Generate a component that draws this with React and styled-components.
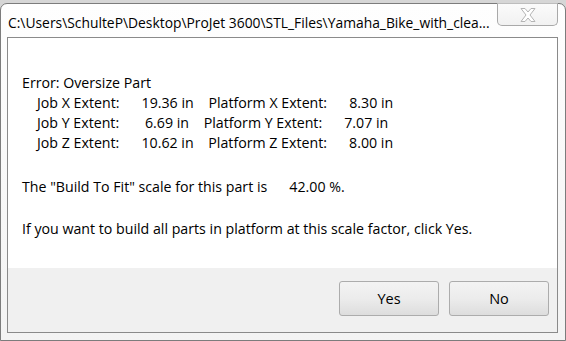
import React from 'react';
import styled, { createGlobalStyle } from 'styled-components';

const Global = createGlobalStyle`
  html, body { margin: 0; padding: 0; background: #d6d6d6; }
  body {
    width: 566px; height: 341px; overflow: hidden;
    font-family: "Open Sans", "Noto Sans", "DejaVu Sans", sans-serif;
    color: #000;
  }
`;

const Screen = styled.div`
  width: 566px;
  height: 341px;
  padding-top: 3px;
  box-sizing: border-box;
  display: flex;
`;

const Window = styled.div`
  position: relative;
  flex: 1;
  height: 338px;
  box-sizing: border-box;
  border: 1px solid #7c7c7c;
  border-radius: 7px 7px 0 0;
  background: linear-gradient(#fefefe, #f3f3f3);
  display: flex;
  flex-direction: column;
  padding: 0 7px 7px 6px;
`;

const TitleBar = styled.div`
  height: 33px;
  display: flex;
  align-items: center;
  padding: 4px 0 0 1px;
  box-sizing: border-box;
  font-size: 13.85px;
  white-space: nowrap;
`;

const CloseButton = styled.div`
  position: absolute;
  top: -1px;
  right: 7px;
  width: 61px;
  height: 23px;
  box-sizing: border-box;
  border: 1px solid #a9a9a9;
  border-top-color: #bdbdbd;
  border-radius: 0 0 5px 5px;
  background: linear-gradient(#fbfbfb, #f1f1f1);
  display: flex;
  align-items: center;
  justify-content: center;
`;

const Client = styled.div`
  flex: 1;
  border: 1px solid #8a8a8a;
  background: #fff;
  display: flex;
  flex-direction: column;
`;

const Content = styled.div`
  flex: 1;
  padding: 35px 14px 0 14px;
  font-size: 14.2px;
  line-height: 20px;
`;

const Line = styled.div`
  white-space: pre;
  padding-left: ${p => (p.$indent ? '15px' : '0')};
  margin-top: ${p => p.$gap || 0}px;
`;

const ButtonBar = styled.div`
  height: 64px;
  box-sizing: border-box;
  background: #f0f0f0;
  display: flex;
  justify-content: flex-end;
  align-items: flex-start;
  gap: 10px;
  padding: 13px 8px 0 0;
`;

const Button = styled.button`
  width: 100px;
  height: 35px;
  box-sizing: border-box;
  border: 1px solid #acacac;
  border-radius: 3px;
  background: linear-gradient(#f3f3f3 0%, #ececec 50%, #dddddd 100%);
  font-family: inherit;
  font-size: 14.5px;
  color: #000;
  padding: 0;
`;

export default function App() {
  return (
    <>
      <Global />
      <Screen>
        <Window>
          <TitleBar>C:\Users\SchulteP\Desktop\ProJet 3600\STL_Files\Yamaha_Bike_with_clea...</TitleBar>
          <CloseButton>
            <svg width="18" height="16" viewBox="0 0 18 16">
              <path
                d="M2 1.5 H6 L9 5 L12 1.5 H16 L11 8 L16 14.5 H12 L9 11 L6 14.5 H2 L7 8 Z"
                fill="#fff"
                stroke="#b4b4b4"
                strokeWidth="1"
                strokeLinejoin="round"
              />
            </svg>
          </CloseButton>
          <Client>
            <Content>
              <Line>Error: Oversize Part</Line>
              <Line $indent>{'Job X Extent:      19.36 in    Platform X Extent:      8.30 in'}</Line>
              <Line $indent>{'Job Y Extent:       6.69 in    Platform Y Extent:      7.07 in'}</Line>
              <Line $indent>{'Job Z Extent:      10.62 in    Platform Z Extent:      8.00 in'}</Line>
              <Line $gap={24}>{'The "Build To Fit" scale for this part is      42.00 %.'}</Line>
              <Line $gap={22}>If you want to build all parts in platform at this scale factor, click Yes.</Line>
            </Content>
            <ButtonBar>
              <Button>Yes</Button>
              <Button>No</Button>
            </ButtonBar>
          </Client>
        </Window>
      </Screen>
    </>
  );
}
